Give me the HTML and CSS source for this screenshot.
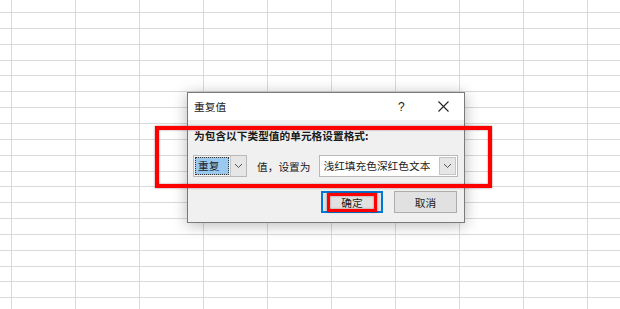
FILE: index.html
```html
<!DOCTYPE html>
<html lang="zh-CN">
<head>
    <meta charset="UTF-8">
    <meta name="viewport" content="width=device-width, initial-scale=1.0">
    <title>重复值</title>
    <link rel="stylesheet" href="styles.css">
</head>
<body>
    <div class="sheet">
        <div class="dialog">
            <div class="titlebar">
                <span class="title">重复值</span>
                <span class="help">?</span>
                <span class="close">
                    <svg width="11" height="11" viewBox="0 0 11 11">
                        <path d="M0.5 0.5 L10.5 10.5 M10.5 0.5 L0.5 10.5" stroke="#222" stroke-width="1.1" fill="none"/>
                    </svg>
                </span>
            </div>
            <div class="body">
                <div class="label">为包含以下类型值的单元格设置格式:</div>
                <div class="row">
                    <div class="combo combo-small">
                        <div class="combo-value"><span class="selected">重复</span></div>
                        <div class="combo-arrow">
                            <svg width="9" height="6" viewBox="0 0 9 6"><path d="M1 1 L4.5 4.5 L8 1" stroke="#555" stroke-width="1" fill="none"/></svg>
                        </div>
                    </div>
                    <span class="row-text">值，设置为</span>
                    <div class="combo combo-wide">
                        <div class="combo-value">浅红填充色深红色文本</div>
                        <div class="combo-arrow">
                            <svg width="9" height="6" viewBox="0 0 9 6"><path d="M1 1 L4.5 4.5 L8 1" stroke="#555" stroke-width="1" fill="none"/></svg>
                        </div>
                    </div>
                </div>
                <div class="buttons">
                    <button class="btn btn-default">确定</button>
                    <button class="btn">取消</button>
                </div>
            </div>
        </div>

        <!-- 标注框 -->
        <div class="mark mark-row"></div>
        <div class="mark mark-ok"></div>
    </div>
</body>
</html>
```

FILE: styles.css
```css
html, body {
    margin: 0;
    padding: 0;
}
body {
    font-family: "Noto Sans CJK SC", "Noto Sans", sans-serif;
    font-size: 10.7px;
    color: #1a1a1a;
}
.sheet {
    position: relative;
    width: 620px;
    height: 309px;
    overflow: hidden;
    background-color: #fff;
    background-image:
        repeating-linear-gradient(to right, transparent 0 11px, #dadada 11px 12px, transparent 12px 64px),
        repeating-linear-gradient(to bottom, transparent 0 12px, #dadada 12px 13px, transparent 13px 15.85px);
}
.dialog {
    position: absolute;
    left: 187px;
    top: 92px;
    width: 278px;
    height: 131px;
    box-sizing: border-box;
    border: 1px solid #7a7a7a;
    background: #f0f0f0;
    box-shadow: 0 2px 14px rgba(0,0,0,0.28);
    display: flex;
    flex-direction: column;
}
.titlebar {
    height: 27px;
    background: #fff;
    display: flex;
    align-items: center;
    padding-left: 6px;
}
.title {
    flex: 1;
}
.help {
    width: 12px;
    font-family: "Liberation Sans", sans-serif;
    font-size: 12px;
    margin-right: 28px;
}
.close {
    display: flex;
    width: 11px;
    margin-right: 15px;
}
.body {
    flex: 1;
    padding: 8px 5px 0 5px;
}
.label {
    font-weight: bold;
    line-height: 16px;
    padding-left: 1px;
}
.row {
    display: flex;
    align-items: center;
    margin-top: 11px;
    height: 22px;
    white-space: nowrap;
}
.combo {
    display: flex;
    flex-shrink: 0;
    height: 22px;
    box-sizing: border-box;
    border: 1px solid #b9b9b9;
    background: #fff;
}
.combo-small {
    width: 54px;
    background: #f3f3f3;
}
.combo-wide {
    width: 139px;
    margin-left: 9px;
}
.combo-value {
    flex: 1;
    display: flex;
    align-items: center;
    padding-left: 3px;
    line-height: 18px;
    white-space: nowrap;
}
.combo-small .combo-value {
    padding: 1px;
}
.selected {
    display: block;
    width: 100%;
    height: 100%;
    box-sizing: border-box;
    background: #99c9ef;
    border: 1px dotted #333;
    padding-left: 2px;
    line-height: 16px;
}
.combo-arrow {
    width: 15px;
    display: flex;
    align-items: center;
    justify-content: center;
    background: #e6e6e6;
    border-left: 1px solid #c4c4c4;
}
.combo-wide .combo-arrow {
    margin: 1px;
    border: 1px solid #c4c4c4;
}
.row-text {
    flex-shrink: 0;
    margin-left: 10px;
}
.buttons {
    display: flex;
    justify-content: flex-end;
    gap: 11px;
    margin-top: 14px;
    padding-right: 2px;
}
.btn {
    width: 63px;
    height: 22px;
    box-sizing: border-box;
    border: 1px solid #adadad;
    background: #e1e1e1;
    font-family: inherit;
    font-size: 10.7px;
    color: #1a1a1a;
    padding: 0;
}
.btn-default {
    width: 62px;
    border: 1px solid #0078d7;
    box-shadow: inset 0 0 0 1px #0078d7;
}
.mark {
    position: absolute;
    box-sizing: border-box;
    border: 4px solid #ff0000;
    box-shadow: 0 0 2px rgba(80,0,0,0.5), inset 0 0 2px rgba(80,0,0,0.5);
}
.mark-row {
    left: 155px;
    top: 126px;
    width: 337px;
    height: 62px;
}
.mark-ok {
    left: 327px;
    top: 193px;
    width: 50px;
    height: 19px;
    border-width: 3px;
}
```
